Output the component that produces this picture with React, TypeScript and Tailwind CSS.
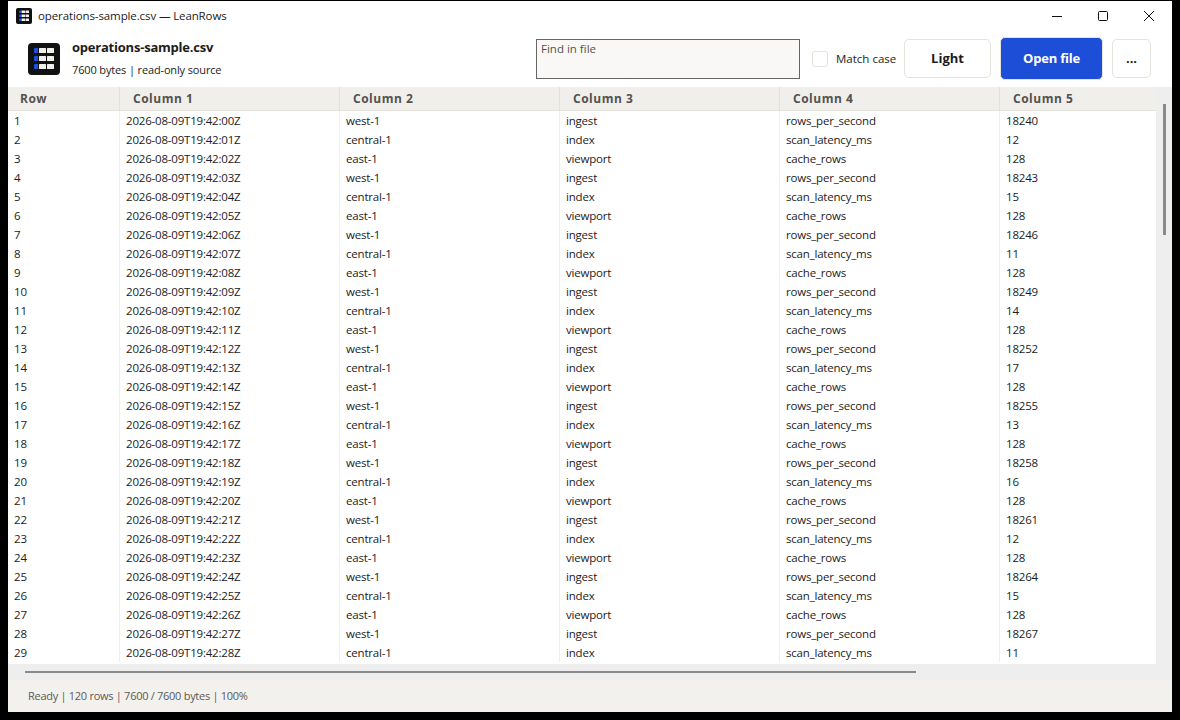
import React from 'react';

const LogoGrid = ({ className }: { className: string }) => (
  <svg viewBox="0 0 32 32" className={className}>
    <rect width="32" height="32" rx="4" fill="#111111" />
    {[5, 13, 21].map(y => (
      <g key={y}>
        <rect x="6" y={y} width="4" height="5" rx="0.5" fill="#1d4ed8" />
        <rect x="11" y={y} width="7" height="5" rx="0.5" fill="#f1efeb" />
        <rect x="19" y={y} width="7" height="5" rx="0.5" fill="#f1efeb" />
      </g>
    ))}
  </svg>
);

const rows = Array.from({ length: 29 }, (_, i) => {
  const cycle = Math.floor(i / 3);
  const stamp = `2026-08-09T19:42:${String(i).padStart(2, '0')}Z`;
  if (i % 3 === 0) return [i + 1, stamp, 'west-1', 'ingest', 'rows_per_second', 18240 + cycle * 3];
  if (i % 3 === 1) return [i + 1, stamp, 'central-1', 'index', 'scan_latency_ms', 11 + (1 + cycle * 3) % 7];
  return [i + 1, stamp, 'east-1', 'viewport', 'cache_rows', 128];
});

const columns = ['Row', 'Column 1', 'Column 2', 'Column 3', 'Column 4', 'Column 5'];

export default function App() {
  return (
    <div className="h-[720px] w-[1180px] overflow-hidden bg-black pl-2 pt-px font-['Open_Sans',sans-serif] text-[11.5px] text-[#1c1c1c]">
      <div className="flex h-[711px] w-[1164px] flex-col bg-white">
        {/* Title bar */}
        <div className="flex h-[30px] items-center pl-2">
          <LogoGrid className="h-4 w-4" />
          <span className="ml-1.5 text-[11.5px] tracking-[-0.11px]">operations-sample.csv — LeanRows</span>
          <div className="ml-auto flex items-center text-[#111111]">
            <div className="flex w-[46px] justify-center">
              <svg viewBox="0 0 12 12" className="h-3 w-3">
                <path d="M1 6.5h10" stroke="currentColor" fill="none" />
              </svg>
            </div>
            <div className="flex w-[46px] justify-center">
              <svg viewBox="0 0 12 12" className="h-3 w-3">
                <rect x="1.5" y="1.5" width="9" height="9" rx="1" stroke="currentColor" fill="none" />
              </svg>
            </div>
            <div className="flex w-[46px] justify-center">
              <svg viewBox="0 0 12 12" className="h-3 w-3">
                <path d="M1 1l10 10M11 1L1 11" stroke="currentColor" fill="none" />
              </svg>
            </div>
          </div>
        </div>

        {/* Toolbar */}
        <div className="flex h-[56px] items-center pb-px pl-5 pr-[21px]">
          <LogoGrid className="mt-px h-8 w-8" />
          <div className="ml-3 flex flex-col pb-[3px]">
            <span className="text-[13px] font-bold leading-[18px] tracking-[-0.22px]">operations-sample.csv</span>
            <span className="mt-[7px] text-[11px] leading-[14px] tracking-[-0.14px]">7600 bytes | read-only source</span>
          </div>
          <div className="ml-auto mt-px h-[40px] w-[264px] border border-[#666666] bg-[#f9f8f6] pl-1 text-[#55524d]">
            Find in file
          </div>
          <div className="ml-3 h-4 w-4 rounded-[3px] border border-[#e6e3dc]" />
          <span className="ml-2 w-[68px]">Match case</span>
          <button className="h-[39px] w-[87px] rounded-[5px] border border-[#e6e3dc] text-[13px] font-bold">Light</button>
          <button className="ml-[9px] h-[43px] w-[103px] rounded-[5px] border border-[#e6e3dc] bg-[#1d4ed8] text-[13px] font-bold tracking-[-0.2px] text-white">
            Open file
          </button>
          <button className="ml-[9px] h-[39px] w-[39px] rounded-[5px] border border-[#e6e3dc] text-[13px] font-bold">...</button>
        </div>

        {/* Table with scrollbars */}
        <div className="flex h-[593px] bg-[#eeeeee]">
          <div className="flex w-[1148px] flex-col">
            <div className="grid h-[24px] grid-cols-[112px_220px_220px_220px_220px_1fr] border-b border-[#e4e1da] bg-[#f1efeb] text-[12px] font-bold tracking-[0.5px] text-[#55524d]">
              {columns.map((name, c) => (
                <div key={name} className={`border-r border-[#e4e1da] leading-[23px] last:border-r-0 ${c === 0 ? 'pl-3' : 'pl-[13px]'}`}>
                  {name}
                </div>
              ))}
            </div>
            <div className="h-[553px] bg-white tracking-[-0.2px]">
              {rows.map(row => (
                <div key={row[0]} className="grid h-[19px] grid-cols-[112px_220px_220px_220px_220px_1fr]">
                  {row.map((value, c) => (
                    <div key={c} className="border-r border-[#e8f0fa] pl-[6px] leading-[19px] last:border-r-0">
                      {value}
                    </div>
                  ))}
                </div>
              ))}
            </div>
            <div className="flex h-[16px] items-center pl-[17px]">
              <div className="h-[2px] w-[891px] bg-[#8a8a8a]" />
            </div>
          </div>
          <div className="flex w-[16px] justify-center pt-[17px]">
            <div className="h-[131px] w-[3px] bg-[#8a8a8a]" />
          </div>
        </div>

        {/* Status bar */}
        <div className="flex h-[32px] items-center bg-[#f3f1ed] pl-5 text-[11px] tracking-[-0.28px] text-[#5c5a55]">
          Ready | 120 rows | 7600 / 7600 bytes | 100%
        </div>
      </div>
    </div>
  );
}
